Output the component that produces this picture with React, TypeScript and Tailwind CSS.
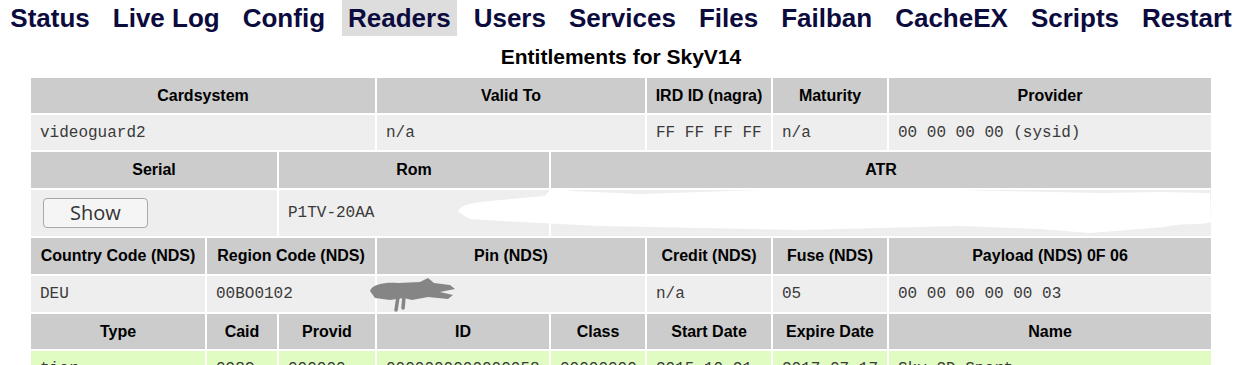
import React from "react";

const menu = ["Status", "Live Log", "Config", "Readers", "Users", "Services", "Files", "Failban", "CacheEX", "Scripts", "Restart"];

const H = ({ span = 1, children, h = "h-[36px]" }: { span?: number; children: React.ReactNode; h?: string }) => (
  <div
    className={`bg-[#cccccc] ${h} flex items-center justify-center text-[16px] font-bold text-black whitespace-nowrap`}
    style={{ gridColumn: `span ${span} / span ${span}` }}
  >
    {children}
  </div>
);

const D = ({ span = 1, children, h = "h-[35px]", bg = "bg-[#eeeeee]" }: { span?: number; children?: React.ReactNode; h?: string; bg?: string }) => (
  <div
    className={`${bg} ${h} flex items-center pl-[9px] text-[16px] text-[#3a3a3a] whitespace-nowrap overflow-hidden`}
    style={{ gridColumn: `span ${span} / span ${span}`, fontFamily: '"Liberation Mono", "Courier New", monospace' }}
  >
    {children}
  </div>
);

export default function App() {
  return (
    <div className="relative w-[1242px] bg-white" style={{ fontFamily: '"Liberation Sans", Arial, sans-serif' }}>
      <nav className="flex justify-center gap-[11px] h-[36px]">
        {menu.map((m) => (
          <a
            key={m}
            className={`px-[6px] h-[36px] leading-[36px] text-[26px] font-bold text-[#0b0b3d] whitespace-nowrap ${m === "Readers" ? "bg-[#dddddd]" : ""}`}
          >
            {m}
          </a>
        ))}
      </nav>
      <div className="h-[42px] flex items-center justify-center text-[21px] font-bold text-black">Entitlements for SkyV14</div>
      <div className="mx-auto w-[1180px] grid gap-[2px] grid-cols-[174px_70px_96px_172px_94px_124px_114px_322px]">
        <H span={3} h="h-[35px]">Cardsystem</H>
        <H span={2} h="h-[35px]">Valid To</H>
        <H h="h-[35px]">IRD ID (nagra)</H>
        <H h="h-[35px]">Maturity</H>
        <H h="h-[35px]">Provider</H>

        <D span={3}>videoguard2</D>
        <D span={2}>n/a</D>
        <D>FF FF FF FF</D>
        <D>n/a</D>
        <D>00 00 00 00 (sysid)</D>

        <H span={2}>Serial</H>
        <H span={2}>Rom</H>
        <H span={4}>ATR</H>

        <D span={2} h="h-[46px]">
          <button
            className="ml-[3px] w-[105px] h-[30px] rounded-[4px] border border-[#a8a8a8] bg-[#f5f5f5] text-[20px] text-[#333333] flex items-center justify-center"
            style={{ fontFamily: '"Open Sans", "Noto Sans", sans-serif' }}
          >
            Show
          </button>
        </D>
        <D span={2} h="h-[46px]">P1TV-20AA</D>
        <D span={4} h="h-[46px]"></D>

        <H>Country Code (NDS)</H>
        <H span={2}>Region Code (NDS)</H>
        <H span={2}>Pin (NDS)</H>
        <H>Credit (NDS)</H>
        <H>Fuse (NDS)</H>
        <H>Payload (NDS) 0F 06</H>

        <D h="h-[36px]">DEU</D>
        <D span={2} h="h-[36px]">00BO0102</D>
        <D span={2} h="h-[36px]"></D>
        <D h="h-[36px]">n/a</D>
        <D h="h-[36px]">05</D>
        <D h="h-[36px]">00 00 00 00 00 03</D>

        <H h="h-[35px]">Type</H>
        <H h="h-[35px]">Caid</H>
        <H h="h-[35px]">Provid</H>
        <H h="h-[35px]">ID</H>
        <H h="h-[35px]">Class</H>
        <H h="h-[35px]">Start Date</H>
        <H h="h-[35px]">Expire Date</H>
        <H h="h-[35px]">Name</H>

        <D bg="bg-[#e1fcc3]" h="h-[36px]">tier</D>
        <D bg="bg-[#e1fcc3]" h="h-[36px]">098C</D>
        <D bg="bg-[#e1fcc3]" h="h-[36px]">000000</D>
        <D bg="bg-[#e1fcc3]" h="h-[36px]">0000000000000058</D>
        <D bg="bg-[#e1fcc3]" h="h-[36px]">00000000</D>
        <D bg="bg-[#e1fcc3]" h="h-[36px]">2015-10-21</D>
        <D bg="bg-[#e1fcc3]" h="h-[36px]">2017-07-17</D>
        <D bg="bg-[#e1fcc3]" h="h-[36px]">Sky 3D Sport</D>
      </div>
      <svg className="absolute left-0 top-0 pointer-events-none" width="1242" height="400" viewBox="0 0 1242 400">
        <path
          d="M 458 212 C 460 205, 470 203, 490 201 L 545 196 C 548 189, 560 187, 572 191 L 640 194 L 760 190 L 880 188 L 1000 191 L 1100 193 L 1160 192 L 1210 193 L 1211 222 C 1200 226, 1185 222, 1165 227 L 1090 233 L 1040 229 L 960 226 L 880 228 L 800 230 L 700 228 L 600 226 L 520 222 L 470 219 Z"
          fill="#ffffff"
        />
        <path
          d="M 370 291 C 372 284, 386 282, 398 283 L 420 282 L 428 278 L 434 283 L 450 285 L 455 289 L 440 292 L 453 295 L 448 299 L 428 297 L 412 300 L 404 298 L 390 300 L 375 298 Z"
          fill="#858585"
        />
        <path d="M 398 297 L 396 310 M 404 297 L 403 308" stroke="#858585" strokeWidth="3.5" strokeLinecap="round" fill="none" />
      </svg>
    </div>
  );
}
